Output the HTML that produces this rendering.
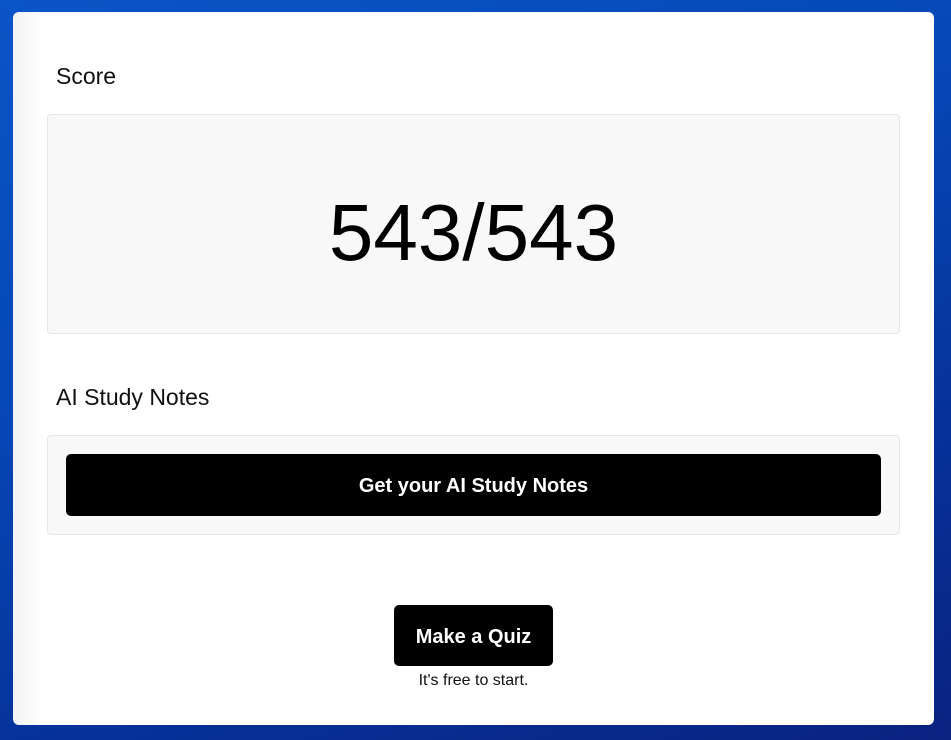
<!DOCTYPE html>
<html><head><style>
html,body{margin:0;padding:0;}
body{width:951px;height:740px;overflow:hidden;position:relative;font-family:"Liberation Sans",sans-serif;
background:linear-gradient(160deg,#0a55c8 0%,#0646b4 40%,#06329a 70%,#0a2280 100%);}
.card{position:absolute;left:13px;top:12px;width:921px;height:713px;background:#fff;border-radius:6px;
background:linear-gradient(90deg,#f3f3f3 0px,#fff 30px);}
.lbl{position:absolute;left:43px;font-size:23px;color:#111;}
.box{position:absolute;left:34px;width:851px;background:#f8f8f8;border:1px solid #e6e6e6;border-radius:4px;}
.num{position:absolute;left:0;right:0;text-align:center;font-size:80px;color:#000;}
.btn{position:absolute;background:#000;color:#fff;border-radius:5px;font-weight:bold;font-size:20px;text-align:center;}
</style></head><body>
<div class="card">
<div class="lbl" style="top:51px">Score</div>
<div class="box" style="top:102px;height:218px"><div class="num" style="top:72px;line-height:92px">543/543</div></div>
<div class="lbl" style="top:372px">AI Study Notes</div>
<div class="box" style="top:423px;height:98px"></div>
<div class="btn" style="left:53px;top:442px;width:815px;height:62px;line-height:65px">Get your AI Study Notes</div>
<div class="btn" style="left:381px;top:593px;width:159px;height:61px;line-height:65px">Make a Quiz</div>
<div style="position:absolute;left:0;width:921px;top:660px;text-align:center;font-size:16px;color:#111">It's free to start.</div>
</div>
</body></html>
